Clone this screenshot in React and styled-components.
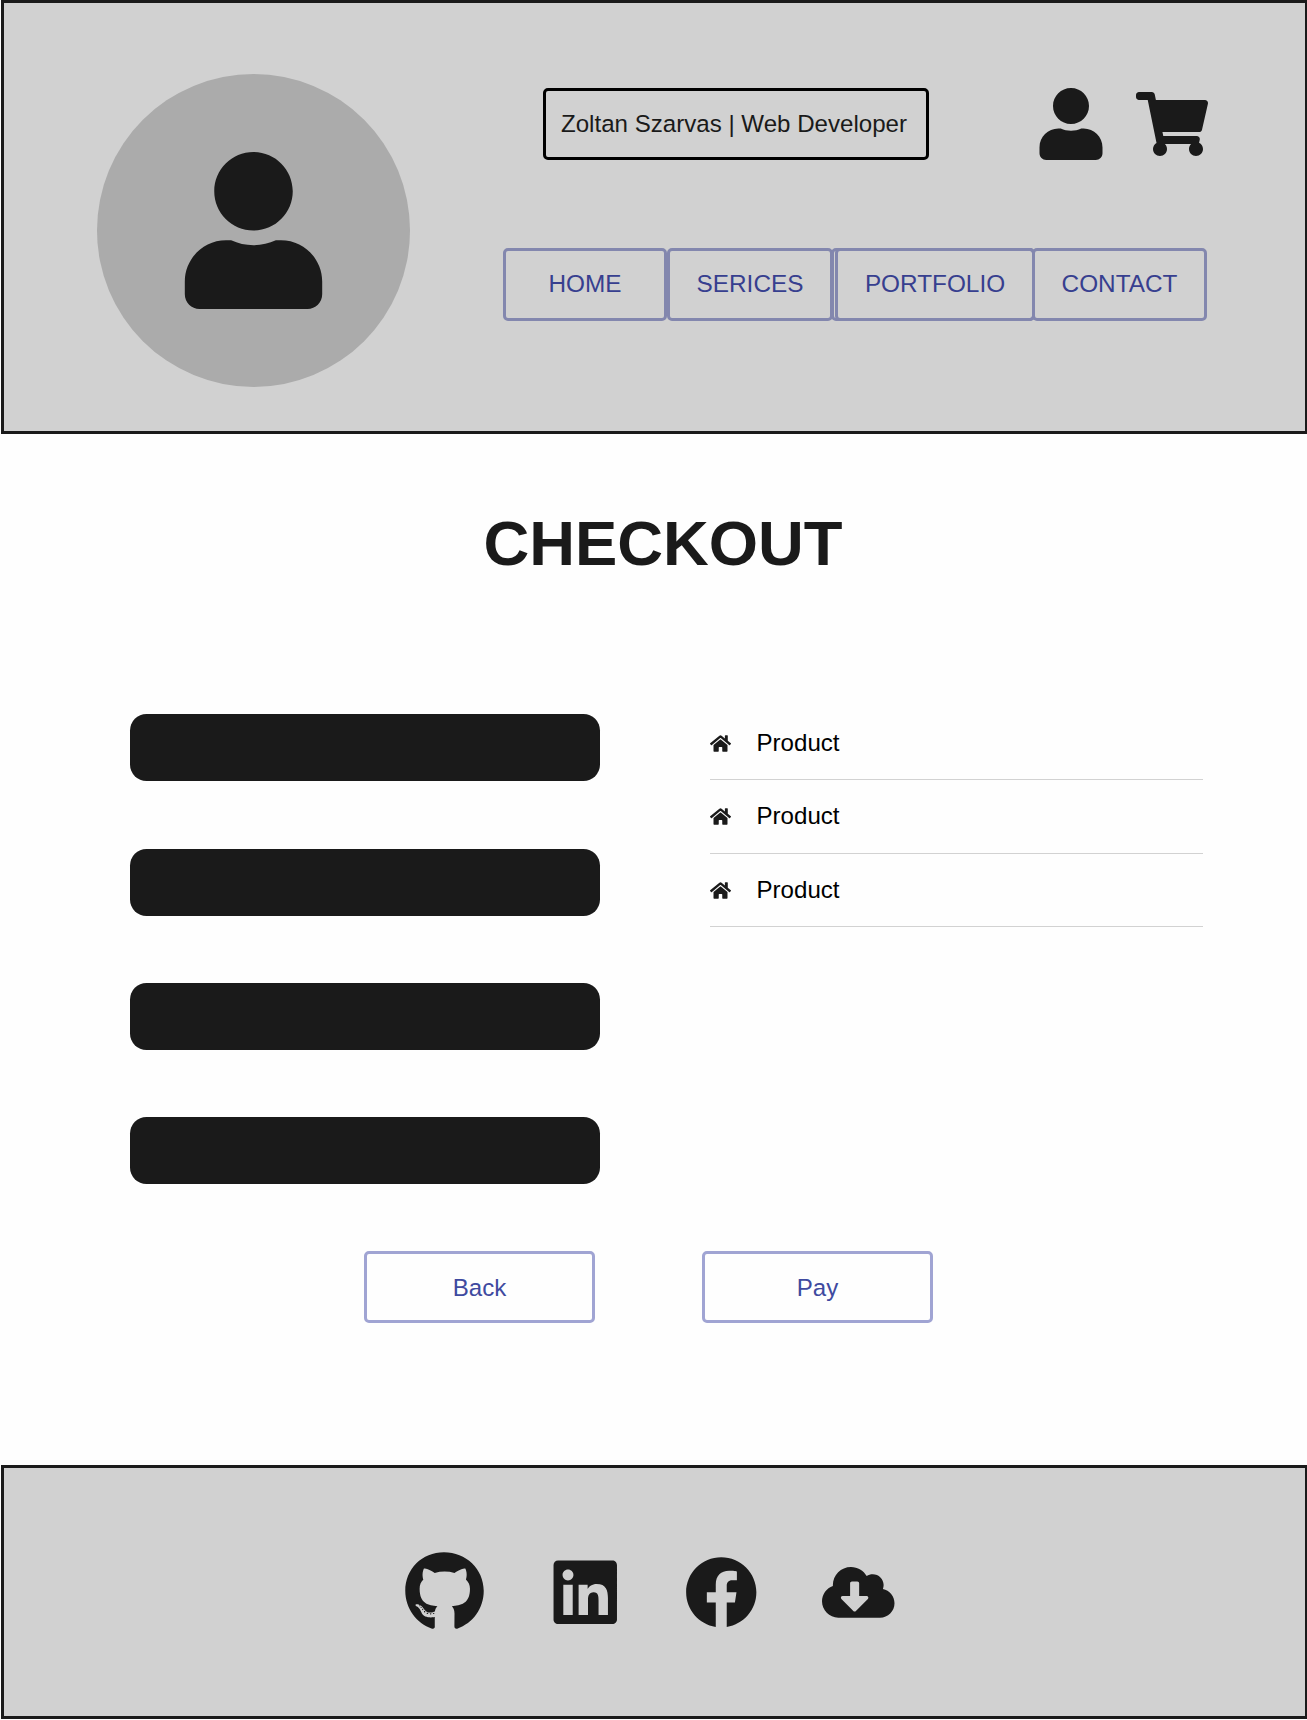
import React from "react";
import styled, { createGlobalStyle } from "styled-components";
import {
  FaUser,
  FaShoppingCart,
  FaHome,
  FaGithub,
  FaLinkedin,
  FaFacebook,
  FaCloudDownloadAlt,
} from "react-icons/fa";

const GlobalStyle = createGlobalStyle`
  * { box-sizing: border-box; }
  body {
    margin: 0;
    background: #fefefe;
    color: #1a1a1a;
    font: 24.1px/28px "Liberation Sans", Arial, sans-serif;
  }
  svg { display: block; flex: none; }
`;

const Page = styled.div`
  width: 1307px;
  height: 1719px;
  padding-left: 1px;
  display: flex;
  flex-direction: column;
  overflow: hidden;
`;

const Header = styled.header`
  width: 1307px;
  height: 434px;
  flex: none;
  display: flex;
  align-items: flex-start;
  background: #d1d1d1;
  border: 3px solid #1a1a1a;
  padding: 70.5px 0 0 93px;
`;

const Avatar = styled.div`
  width: 313px;
  height: 313px;
  flex: none;
  border-radius: 50%;
  background: #ababab;
  display: flex;
  align-items: center;
  justify-content: center;
`;

const HeaderContent = styled.div`
  flex: 1;
  margin-left: 93px;
  padding-top: 14.5px;
`;

const TopRow = styled.div`
  display: flex;
  height: 72px;
  padding-left: 40px;
`;

const NameTag = styled.div`
  width: 385.5px;
  height: 72px;
  border: 3px solid #000;
  border-radius: 5px;
  padding: 19px 0 0 15px;
  white-space: nowrap;
`;

const Shortcuts = styled.div`
  display: flex;
  align-items: center;
  gap: 28.5px;
  margin-left: 106.5px;
`;

const Nav = styled.nav`
  display: flex;
  margin-top: 88px;
  font-size: 24.35px;
`;

const OutlineButton = styled.button`
  position: relative;
  width: ${(p) => p.$width}px;
  height: ${(p) => p.$height || 73}px;
  flex: none;
  margin: 0 0 0 ${(p) => p.$shift || 0}px;
  padding: 0 0 1px;
  background: transparent;
  border: 3px solid ${(p) => p.$border || "#8387ae"};
  border-radius: 5px;
  color: ${(p) => p.$color || "#373f8f"};
  font: inherit;
`;

const ActionButton = styled(OutlineButton)`
  padding: 1px 0 0;
`;

/* The stacked tab keeps a second outline peeking out on its left side. */
const StackedButton = styled(OutlineButton)`
  &::before {
    content: "";
    position: absolute;
    inset: -3px -3px -3px -7px;
    border: 3px solid #8387ae;
    border-radius: 5px;
  }
`;

const Main = styled.main`
  flex: 1;
`;

const Title = styled.h1`
  margin: 72px 0 0;
  padding-left: 18px;
  text-align: center;
  font-size: 63.4px;
  line-height: 74px;
  font-weight: bold;
`;

const Columns = styled.div`
  display: flex;
  margin: 134.4px 0 0 129px;
`;

const Fields = styled.div`
  display: grid;
  gap: 67.3px;
  width: 470px;
`;

const Field = styled.div`
  height: 67px;
  border-radius: 16.5px;
  background: #1a1a1a;
`;

const Products = styled.ul`
  list-style: none;
  margin: -8.2px 0 0 110px;
  padding: 0;
  width: 493px;
`;

const Product = styled.li`
  height: 73.7px;
  display: flex;
  align-items: center;
  gap: 25.5px;
  border-bottom: 1px solid #d2d2d2;
  color: #000;

  svg { color: #1a1a1a; margin-top: 1px; }
`;

const Actions = styled.div`
  display: flex;
  gap: 107px;
  margin: 67px 0 0 363px;
`;

const Footer = styled.footer`
  width: 1307px;
  height: 254px;
  flex: none;
  display: flex;
  align-items: center;
  background: #d1d1d1;
  border: 3px solid #1a1a1a;
  padding-left: 399.5px;
`;

const Social = styled.a`
  color: #1a1a1a;
  margin: 0 0 ${(p) => p.$lift || 0}px ${(p) => p.$gap || 0}px;
`;

const FIELDS = [0, 1, 2, 3];
const PRODUCTS = ["Product", "Product", "Product"];

export default function App() {
  return (
    <Page>
      <GlobalStyle />
      <Header>
        <Avatar>
          <FaUser size={157} />
        </Avatar>
        <HeaderContent>
          <TopRow>
            <NameTag>Zoltan Szarvas | Web Developer</NameTag>
            <Shortcuts>
              <FaUser size={72} />
              <FaShoppingCart size={72} />
            </Shortcuts>
          </TopRow>
          <Nav>
            <OutlineButton $width={164}>HOME</OutlineButton>
            <OutlineButton $width={166}>SERICES</OutlineButton>
            <StackedButton $width={200} $shift={2}>PORTFOLIO</StackedButton>
            <OutlineButton $width={175} $shift={-3}>CONTACT</OutlineButton>
          </Nav>
        </HeaderContent>
      </Header>
      <Main>
        <Title>CHECKOUT</Title>
        <Columns>
          <Fields>
            {FIELDS.map((id) => (
              <Field key={id} />
            ))}
          </Fields>
          <Products>
            {PRODUCTS.map((name, i) => (
              <Product key={i}>
                <FaHome size={21} />
                {name}
              </Product>
            ))}
          </Products>
        </Columns>
        <Actions>
          <ActionButton $width={231} $height={72} $border="#a0a4d3" $color="#3f4aa0">Back</ActionButton>
          <ActionButton $width={231} $height={72} $border="#a0a4d3" $color="#3f4aa0">Pay</ActionButton>
        </Actions>
      </Main>
      <Footer>
        <Social $lift={1}><FaGithub size={81} /></Social>
        <Social $gap={64}><FaLinkedin size={72.5} /></Social>
        <Social $gap={64}><FaFacebook size={72.5} /></Social>
        <Social $gap={64.5}><FaCloudDownloadAlt size={72.5} /></Social>
      </Footer>
    </Page>
  );
}
